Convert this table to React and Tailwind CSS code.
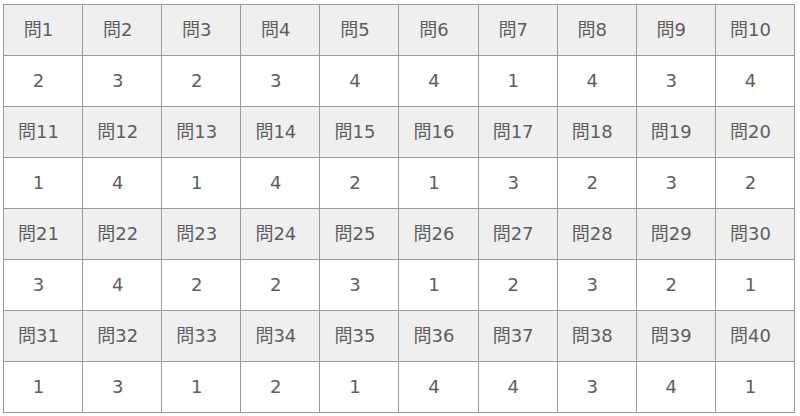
import React from 'react';

// answers for 問1〜問40, 10 per row
const answers = [
  [2, 3, 2, 3, 4, 4, 1, 4, 3, 4],
  [1, 4, 1, 4, 2, 1, 3, 2, 3, 2],
  [3, 4, 2, 2, 3, 1, 2, 3, 2, 1],
  [1, 3, 1, 2, 1, 4, 4, 3, 4, 1],
];

export default function App() {
  return (
    <div className="w-[800px] h-[416px] bg-white pt-[4px] pl-[3px]">
      <table
        className="w-[792px] table-fixed border-collapse text-[#5e5e5e] text-[18px]"
        style={{ fontFamily: '"DejaVu Sans", "Noto Sans CJK JP", sans-serif' }}
      >
        <tbody>
          {answers.map((row, r) => (
            <React.Fragment key={r}>
              <tr className="h-[51px] bg-[#efefef]">
                {row.map((_, c) => (
                  <td key={c} className="border border-[#9a9a9a] text-center pr-[9px] leading-none">
                    問{r * 10 + c + 1}
                  </td>
                ))}
              </tr>
              <tr className="h-[51px] bg-white">
                {row.map((a, c) => (
                  <td key={c} className="border border-[#9a9a9a] text-center pr-[9px] leading-none">
                    {a}
                  </td>
                ))}
              </tr>
            </React.Fragment>
          ))}
        </tbody>
      </table>
    </div>
  );
}
